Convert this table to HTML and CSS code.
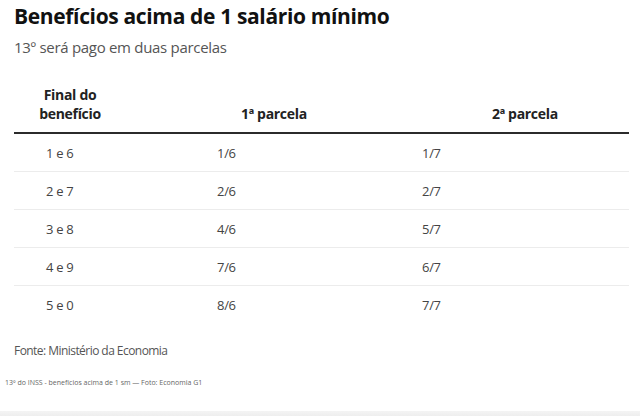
FILE: index.html
```html
<!DOCTYPE html>
<html lang="pt-BR">
<head>
<meta charset="utf-8">
<title>Benefícios acima de 1 salário mínimo</title>
<link rel="stylesheet" href="styles.css">
</head>
<body>
<main class="page">
  <section class="chart">
    <h1 class="title">Benefícios acima de 1 salário mínimo</h1>
    <p class="subtitle">13º será pago em duas parcelas</p>
    <div class="table">
      <div class="row head">
        <div class="c1">Final do<br>benefício</div>
        <div class="c2">1ª parcela</div>
        <div class="c3">2ª parcela</div>
      </div>
      <div class="row"><div class="c1">1 e 6</div><div class="c2">1/6</div><div class="c3">1/7</div></div>
      <div class="row"><div class="c1">2 e 7</div><div class="c2">2/6</div><div class="c3">2/7</div></div>
      <div class="row"><div class="c1">3 e 8</div><div class="c2">4/6</div><div class="c3">5/7</div></div>
      <div class="row"><div class="c1">4 e 9</div><div class="c2">7/6</div><div class="c3">6/7</div></div>
      <div class="row last"><div class="c1">5 e 0</div><div class="c2">8/6</div><div class="c3">7/7</div></div>
    </div>
    <p class="source">Fonte: Ministério da Economia</p>
  </section>
  <p class="caption">13º do INSS - benefícios acima de 1 sm — Foto: Economia G1</p>
</main>
<div class="bottom-shade"></div>
</body>
</html>
```
FILE: styles.css
```css
html, body {
  margin: 0;
  padding: 0;
  background: #ffffff;
}
body {
  width: 640px;
  height: 416px;
  overflow: hidden;
  position: relative;
  font-family: "Open Sans", "DejaVu Sans", sans-serif;
  color: #333;
}
.page {
  display: flex;
  flex-direction: column;
}
.chart {
  padding: 0 11px 0 14px;
}
.title {
  margin: 0;
  padding-top: 2px;
  font-size: 21px;
  line-height: 28px;
  font-weight: 700;
  letter-spacing: -0.35px;
  color: #111;
}
.subtitle {
  margin: 7px 0 0;
  font-size: 15px;
  line-height: 20px;
  color: #555;
  letter-spacing: -0.3px;
}
.table {
  margin-top: 17px;
  display: flex;
  flex-direction: column;
}
.row {
  display: grid;
  grid-template-columns: 112px 288px 1fr;
  height: 37px;
  align-items: center;
  border-bottom: 1px solid #ececec;
  font-size: 13px;
  color: #444;
  letter-spacing: -0.3px;
}
.row.last {
  border-bottom: none;
}
.row .c1 { padding-left: 32px; }
.row .c2 { padding-left: 91px; }
.row .c3 { padding-left: 8px; }
.row.head {
  height: 49px;
  align-items: end;
  padding-bottom: 9px;
  border-bottom: 2px solid #2b2b2b;
  font-size: 14px;
  line-height: 19px;
  font-weight: 700;
  color: #222;
}
.row.head .c1 { padding-left: 0; text-align: center; }
.row.head .c2 { padding-left: 115px; }
.row.head .c3 { padding-left: 78px; }
.source {
  margin: 20px 0 0;
  font-size: 12px;
  line-height: 16px;
  color: #555;
  letter-spacing: -0.55px;
}
.caption {
  margin: 19px 0 0 5px;
  font-size: 7px;
  line-height: 10px;
  color: #666;
}
.bottom-shade {
  position: absolute;
  left: 0;
  right: 0;
  bottom: 0;
  height: 5px;
  background: linear-gradient(#f4f4f4, #eeeeee);
}
```
